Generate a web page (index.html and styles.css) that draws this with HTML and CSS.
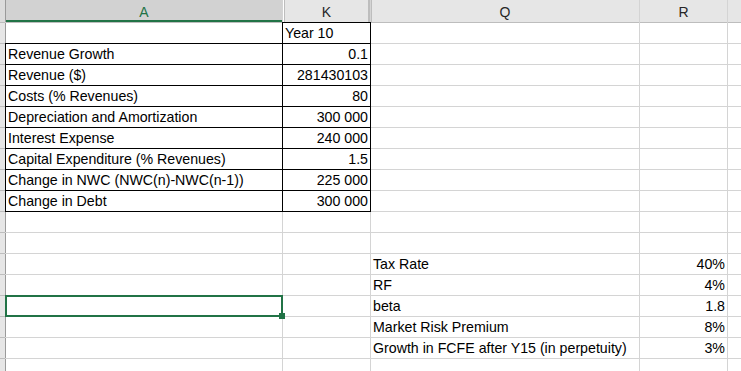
FILE: index.html
```html
<!DOCTYPE html>
<html lang="en">
<head>
    <meta charset="UTF-8">
    <meta name="viewport" content="width=device-width, initial-scale=1.0">
    <title>FCFE Model - Sheet</title>
    <link rel="stylesheet" href="styles.css">
</head>
<body>
    <div class="sheet">
        <!-- column headers -->
        <div class="rh corner"></div>
        <div class="ch ch-active">A</div>
        <div class="ch ch-k">K</div>
        <div class="ch ch-q">Q</div>
        <div class="ch">R</div>
        <div class="ch"></div>

        <!-- row 1 -->
        <div class="rh"></div>
        <div class="c"></div>
        <div class="c bx">Year 10</div>
        <div class="c"></div>
        <div class="c"></div>
        <div class="c"></div>

        <!-- row 2 -->
        <div class="rh"></div>
        <div class="c bx">Revenue Growth</div>
        <div class="c bx num">0.1</div>
        <div class="c"></div>
        <div class="c"></div>
        <div class="c"></div>

        <!-- row 3 -->
        <div class="rh"></div>
        <div class="c bx">Revenue ($)</div>
        <div class="c bx num">281430103</div>
        <div class="c"></div>
        <div class="c"></div>
        <div class="c"></div>

        <!-- row 4 -->
        <div class="rh"></div>
        <div class="c bx">Costs (% Revenues)</div>
        <div class="c bx num">80</div>
        <div class="c"></div>
        <div class="c"></div>
        <div class="c"></div>

        <!-- row 5 -->
        <div class="rh"></div>
        <div class="c bx">Depreciation and Amortization</div>
        <div class="c bx num">300 000</div>
        <div class="c"></div>
        <div class="c"></div>
        <div class="c"></div>

        <!-- row 6 -->
        <div class="rh"></div>
        <div class="c bx">Interest Expense</div>
        <div class="c bx num">240 000</div>
        <div class="c"></div>
        <div class="c"></div>
        <div class="c"></div>

        <!-- row 7 -->
        <div class="rh"></div>
        <div class="c bx">Capital Expenditure (% Revenues)</div>
        <div class="c bx num">1.5</div>
        <div class="c"></div>
        <div class="c"></div>
        <div class="c"></div>

        <!-- row 8 -->
        <div class="rh"></div>
        <div class="c bx">Change in NWC (NWC(n)-NWC(n-1))</div>
        <div class="c bx num">225 000</div>
        <div class="c"></div>
        <div class="c"></div>
        <div class="c"></div>

        <!-- row 9 -->
        <div class="rh"></div>
        <div class="c bx">Change in Debt</div>
        <div class="c bx num">300 000</div>
        <div class="c"></div>
        <div class="c"></div>
        <div class="c"></div>

        <!-- row 10 -->
        <div class="rh"></div>
        <div class="c"></div>
        <div class="c"></div>
        <div class="c"></div>
        <div class="c"></div>
        <div class="c"></div>

        <!-- row 11 -->
        <div class="rh"></div>
        <div class="c"></div>
        <div class="c"></div>
        <div class="c"></div>
        <div class="c"></div>
        <div class="c"></div>

        <!-- row 12 -->
        <div class="rh"></div>
        <div class="c"></div>
        <div class="c"></div>
        <div class="c">Tax Rate</div>
        <div class="c num">40%</div>
        <div class="c"></div>

        <!-- row 13 -->
        <div class="rh"></div>
        <div class="c"></div>
        <div class="c"></div>
        <div class="c">RF</div>
        <div class="c num">4%</div>
        <div class="c"></div>

        <!-- row 14 (active cell) -->
        <div class="rh"></div>
        <div class="c selected"></div>
        <div class="c"></div>
        <div class="c">beta</div>
        <div class="c num">1.8</div>
        <div class="c"></div>

        <!-- row 15 -->
        <div class="rh"></div>
        <div class="c"></div>
        <div class="c"></div>
        <div class="c">Market Risk Premium</div>
        <div class="c num">8%</div>
        <div class="c"></div>

        <!-- row 16 -->
        <div class="rh"></div>
        <div class="c"></div>
        <div class="c"></div>
        <div class="c">Growth in FCFE after Y15 (in perpetuity)</div>
        <div class="c num">3%</div>
        <div class="c"></div>

        <!-- row 17 -->
        <div class="rh"></div>
        <div class="c"></div>
        <div class="c"></div>
        <div class="c"></div>
        <div class="c"></div>
        <div class="c"></div>
    </div>
</body>
</html>
```

FILE: styles.css
```css
body {
    margin: 0;
    padding: 0;
    background-color: #fff;
    font-family: "Liberation Sans", Arial, sans-serif;
    overflow: hidden;
}

/* gridlines are the 1px gaps showing the sheet background */
.sheet {
    display: grid;
    grid-template-columns: 5px 276px 87px 268px 87px 1fr;
    grid-template-rows: 22px;
    grid-auto-rows: 20px;
    gap: 1px;
    width: 741px;
    height: 371px;
    background-color: #d4d4d4;
    overflow: hidden;
}

/* row header strip (cut off at the left edge) */
.rh {
    background-color: #e6e6e6;
    box-shadow: 1px 0 0 #9a9a9a, 0 1px 0 #bdbdbd;
}

.rh.corner {
    background-color: #dcdcdc;
}

/* column headers */
.ch {
    background-color: #e6e6e6;
    color: #262626;
    font-size: 14px;
    line-height: 20px;
    padding-top: 2px;
    text-align: center;
    box-shadow: 0 1px 0 #bdbdbd;
}

.ch-active {
    background-color: #d2d2d2;
    color: #217346;
    box-shadow: inset 0 -2px 0 #217346, 0 1px 0 #bdbdbd;
}

/* hidden columns give a double separator */
.ch-k {
    box-shadow: inset 1px 0 0 #fff, inset 2px 0 0 #bdbdbd, inset -2px 0 0 #bdbdbd, 0 1px 0 #bdbdbd;
}

.ch-q {
    box-shadow: inset 1px 0 0 #bdbdbd, 0 1px 0 #bdbdbd;
}

/* cells */
.c {
    background-color: #fff;
    color: #000;
    font-size: 14.2px;
    line-height: 19px;
    padding: 1px 2px 0;
    white-space: nowrap;
    overflow: hidden;
}

.num {
    text-align: right;
}

/* thin black cell borders */
.bx {
    box-shadow: 0 0 0 1px #000;
}

/* active cell */
.selected {
    position: relative;
    overflow: visible;
    outline: 2px solid #217346;
    outline-offset: -1px;
    z-index: 2;
}

.selected::after {
    content: "";
    position: absolute;
    right: -3px;
    bottom: -3px;
    width: 6px;
    height: 6px;
    background-color: #217346;
}
```
